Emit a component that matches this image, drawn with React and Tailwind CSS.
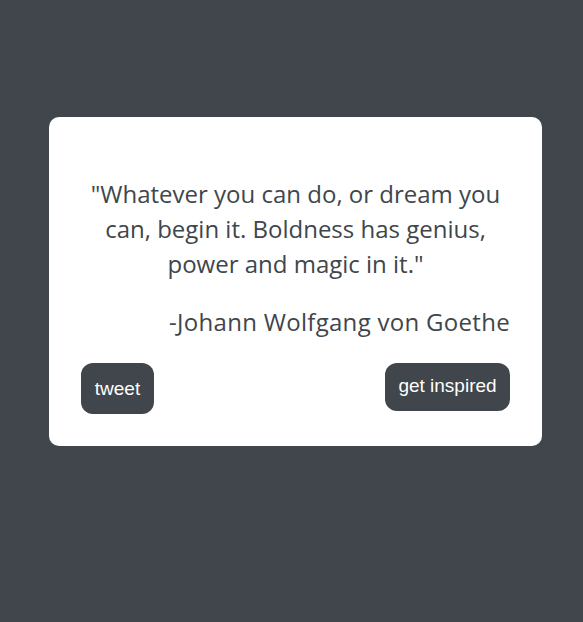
import React from 'react';

const App = () => {
  return (
    <div className="min-h-[622px] w-full bg-[#40464c] pt-[117px]">
      <div
        id="quote-box"
        className="ml-[49px] w-[493px] rounded-[10px] bg-white px-[32px] pt-[59px] pb-[32px] text-[#40464c]"
        style={{ fontFamily: '"Open Sans", "Noto Sans", sans-serif' }}
      >
        <p id="text" className="text-center text-[24px] leading-[35px]">
          "Whatever you can do, or dream you can, begin it. Boldness has genius, power and magic in it."
        </p>
        <p id="author" className="mt-[23px] text-right text-[24px] leading-[35px] tracking-[0.3px]">
          -Johann Wolfgang von Goethe
        </p>
        <div className="mt-[24px] flex items-start justify-between" style={{ fontFamily: '"Liberation Sans", Arial, sans-serif' }}>
          <button className="flex h-[51px] w-[73px] items-center justify-center rounded-[12px] bg-[#40464c] pt-[2px] text-[19px] text-white">
            tweet
          </button>
          <button className="flex h-[48px] w-[125px] items-center justify-center rounded-[12px] bg-[#40464c] pb-[2px] text-[19px] text-white">
            get inspired
          </button>
        </div>
      </div>
    </div>
  );
};

export default App;
